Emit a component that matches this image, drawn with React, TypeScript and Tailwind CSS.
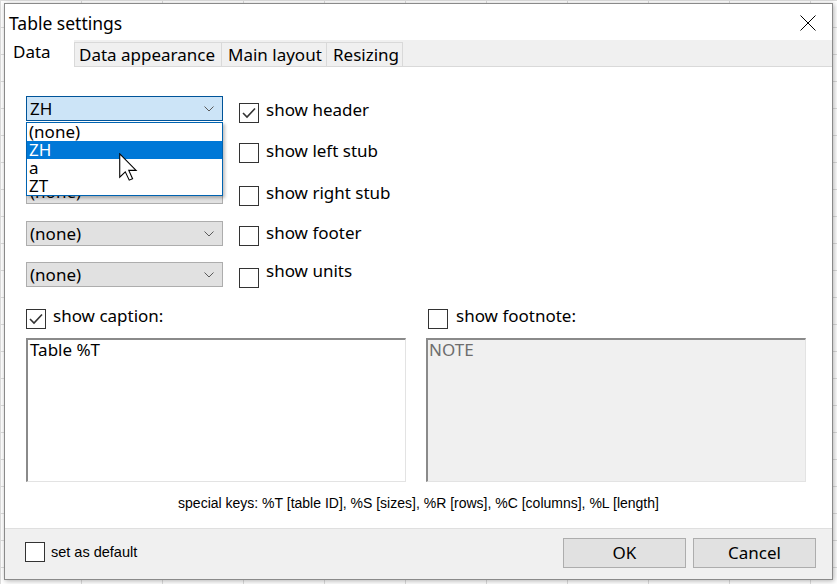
import React from "react";

function Chevron() {
  return (
    <svg width="10" height="6" viewBox="0 0 10 6" className="shrink-0">
      <path d="M0.5 0.5 L5 5 L9.5 0.5" fill="none" stroke="#5a5a5a" strokeWidth="1" />
    </svg>
  );
}

function Select({ value, open }: { value: string; open?: boolean }) {
  return (
    <div
      className={`h-[25px] w-[197px] flex items-center justify-between pl-[3px] pr-[8px] border text-[17px] leading-[20px] text-black ${
        open ? "bg-[#cce4f7] border-[#005499]" : "bg-[#e1e1e1] border-[#adadad]"
      }`}
    >
      <span>{value}</span>
      <Chevron />
    </div>
  );
}

function Box({ checked }: { checked?: boolean }) {
  return (
    <div className="w-[20px] h-[20px] shrink-0 border border-[#333333] bg-white flex items-center justify-center">
      {checked && (
        <svg width="18" height="18" viewBox="0 0 18 18">
          <path d="M3 9 L7 13 L15 4.5" fill="none" stroke="#333333" strokeWidth="1.6" />
        </svg>
      )}
    </div>
  );
}

function CheckRow({
  label,
  checked,
  off,
  mt,
}: {
  label: string;
  checked?: boolean;
  off: string;
  mt: string;
}) {
  return (
    <div className={`flex items-start h-[20px] ${mt}`}>
      <Box checked={checked} />
      <span className={`ml-[7px] text-[17px] leading-[20px] text-black whitespace-nowrap ${off}`}>{label}</span>
    </div>
  );
}

function Cursor() {
  return (
    <svg width="19" height="28" viewBox="0 0 13 19" className="absolute left-[114px] top-[86px]">
      <path
        d="M0.5 0.5 L0.5 16.5 L4.3 12.8 L7 18.5 L9.3 17.5 L6.7 11.8 L11.7 11.8 Z"
        fill="white"
        stroke="black"
        strokeWidth="0.75"
        strokeLinejoin="miter"
      />
    </svg>
  );
}

export default function App() {
  return (
    <div className="w-[837px] h-[584px] overflow-hidden bg-white bg-[linear-gradient(#dcdcdc_1px,transparent_1px),linear-gradient(90deg,#dcdcdc_1px,transparent_1px)] bg-[size:81px_27px] pl-[4px] pt-[3px] font-['Noto_Sans',sans-serif]">
      <div className="w-[829px] h-[577px] border border-[#8a8a8a] bg-white flex flex-col shadow-[1px_1px_5px_rgba(0,0,0,0.3)]">
        {/* title bar */}
        <div className="h-[36px] shrink-0 flex items-center justify-between pl-[4px] pr-[16px]">
          <span className="text-[17.5px] leading-[24px] text-black pt-[1px]">Table settings</span>
          <svg width="16" height="16" viewBox="0 0 16 16" className="mt-[1px]">
            <path d="M0.5 0.5 L15.5 15.5 M15.5 0.5 L0.5 15.5" stroke="black" strokeWidth="1" />
          </svg>
        </div>
        {/* tabs */}
        <div className="h-[27px] shrink-0 bg-[#f0f0f0] border-b border-[#d9d9d9] flex items-start text-[17px] leading-[20px] text-black">
          <div className="w-[69px] h-[27px] bg-white pl-[8px] pt-[2px]">Data</div>
          <div className="mt-[2px] h-[24px] w-[148px] border border-b-0 border-[#d9d9d9] bg-[#f0f0f0] pl-[4px] pt-[2px]">Data appearance</div>
          <div className="mt-[2px] h-[24px] w-[105px] border border-b-0 border-l-0 border-[#d9d9d9] bg-[#f0f0f0] pl-[6px] pt-[2px]">Main layout</div>
          <div className="mt-[2px] h-[24px] w-[76px] border border-b-0 border-l-0 border-[#d9d9d9] bg-[#f0f0f0] pl-[6px] pt-[2px]">Resizing</div>
        </div>
        {/* content */}
        <div className="relative h-[461px] shrink-0 bg-white px-[21px] pt-[29px]">
          <div className="flex gap-[16px]">
            <div className="flex flex-col w-[197px]">
              <Select value="ZH" open />
              <div className="mt-[16px]">
                <Select value="" />
              </div>
              <div className="mt-[17px]">
                <Select value="(none)" />
              </div>
              <div className="mt-[17px]">
                <Select value="(none)" />
              </div>
              <div className="mt-[16px]">
                <Select value="(none)" />
              </div>
            </div>
            <div className="flex flex-col pt-[7px]">
              <CheckRow label="show header" checked off="-mt-[3px]" mt="" />
              <CheckRow label="show left stub" off="-mt-[2px]" mt="mt-[20px]" />
              <CheckRow label="show right stub" off="-mt-[3px]" mt="mt-[23px]" />
              <CheckRow label="show footer" off="-mt-[3px]" mt="mt-[20px]" />
              <CheckRow label="show units" off="-mt-[7px]" mt="mt-[22px]" />
            </div>
          </div>

          <div className="mt-[21px] flex gap-[20px]">
            <div className="w-[380px] flex flex-col">
              <div className="flex items-start h-[20px]">
                <Box checked />
                <span className="ml-[7px] -mt-[3px] text-[17px] leading-[20px] text-black">show caption:</span>
              </div>
              <div className="mt-[9px] h-[144px] border-t-2 border-l-2 border-r border-b border-t-[#8a8a8a] border-l-[#8a8a8a] border-r-[#e3e3e3] border-b-[#e3e3e3] bg-white pl-[2px] text-[17px] leading-[20px] text-black">
                Table %T
              </div>
            </div>
            <div className="w-[380px] flex flex-col">
              <div className="flex items-start h-[20px] pl-[2px]">
                <Box />
                <span className="ml-[8px] -mt-[3px] text-[17px] leading-[20px] text-black">show footnote:</span>
              </div>
              <div className="mt-[9px] h-[144px] border-t-2 border-l-2 border-r border-b border-t-[#8a8a8a] border-l-[#8a8a8a] border-r-[#e3e3e3] border-b-[#e3e3e3] bg-[#f0f0f0] pl-[1px] text-[17px] leading-[20px] text-[#6d6d6d]">
                NOTE
              </div>
            </div>
          </div>

          <div className="mt-[13px] text-center text-[14px] leading-[16px] text-black font-['Liberation_Sans',Arial,sans-serif]">
            special keys: %T [table ID], %S [sizes], %R [rows], %C [columns], %L [length]
          </div>

          {/* open dropdown list */}
          <div className="absolute left-[21px] top-[55px] w-[197px] h-[74px] border border-[#0063b1] bg-white shadow-[2px_2px_3px_rgba(0,0,0,0.25)] flex flex-col text-[17px] leading-[18px]">
            <div className="h-[18px] pl-[2px] text-black">(none)</div>
            <div className="h-[18px] pl-[2px] bg-[#0078d7] text-white">ZH</div>
            <div className="h-[18px] pl-[2px] text-black">a</div>
            <div className="h-[18px] pl-[2px] text-black">ZT</div>
          </div>
          <Cursor />
        </div>
        {/* footer */}
        <div className="flex-1 border-t border-[#dfdfdf] bg-[#f0f0f0] flex items-start justify-between pl-[20px] pr-[16px]">
          <div className="mt-[13px] flex items-center">
            <Box />
            <span className="ml-[6px] text-[14.5px] leading-[18px] text-black font-['Liberation_Sans',Arial,sans-serif]">set as default</span>
          </div>
          <div className="mt-[9px] flex gap-[7px]">
            <div className="w-[123px] h-[30px] bg-[#e1e1e1] border border-[#adadad] flex items-center justify-center text-[17px] leading-[20px] text-black">OK</div>
            <div className="w-[123px] h-[30px] bg-[#e1e1e1] border border-[#adadad] flex items-center justify-center text-[17px] leading-[20px] text-black">Cancel</div>
          </div>
        </div>
      </div>
    </div>
  );
}
